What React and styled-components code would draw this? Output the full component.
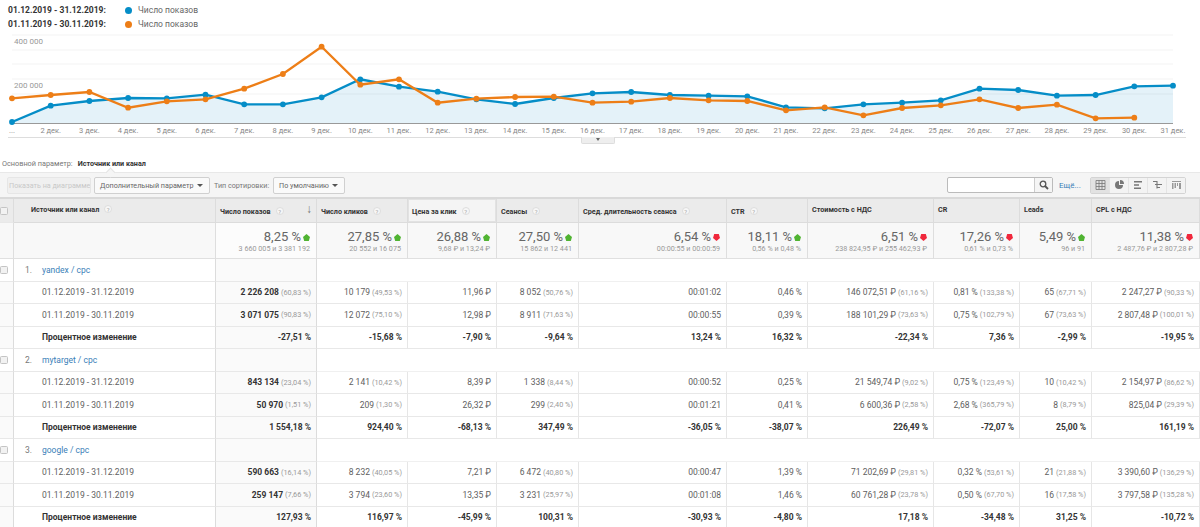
import React from 'react';
import styled, { createGlobalStyle } from 'styled-components';

const GlobalStyle = createGlobalStyle`
  html, body {
    margin: 0;
    padding: 0;
    background: #fff;
    font-family: Roboto, "Liberation Sans", sans-serif;
    overflow: hidden;
  }
`;

const COLUMNS = '14px 202px 101px 91px 89px 82px 148px 81px 126px 86px 72px 108px';
const ROW_HEIGHT = 22.5;

const Page = styled.div`
  width: 1200px;
  height: 527px;
  overflow: hidden;
`;

const Legend = styled.div`
  padding-top: 3px;
`;

const LegendRow = styled.div`
  display: flex;
  align-items: center;
  height: 14px;
  padding-left: 8px;
`;

const LegendDate = styled.span`
  width: 117px;
  font-size: 8.5px;
  font-weight: 700;
  color: #333;
`;

const LegendDot = styled.span`
  width: 7px;
  height: 7px;
  border-radius: 50%;
  margin-right: 6px;
  background: ${props => props.color};
`;

const LegendText = styled.span`
  font-size: 8.5px;
  color: #666;
`;

const ChartWrap = styled.div`
  position: relative;
  height: 114px;
`;

const ChartSvg = styled.svg`
  display: block;
`;

const AxisLabel = styled.text`
  font-size: 7.5px;
  fill: #888;
  font-family: Roboto, sans-serif;
`;

const ValueLabel = styled(AxisLabel)`
  font-size: 8px;
  fill: #999;
`;

const ChartHandle = styled.div`
  position: absolute;
  left: 581px;
  top: 106px;
  width: 32px;
  height: 6px;
  background: #eee;
  border: 1px solid #ddd;
  border-top: 0;
  border-radius: 0 0 2px 2px;
  display: flex;
  justify-content: center;

  &::after {
    content: '';
    margin-top: 1px;
    border: 2.5px solid transparent;
    border-top: 3px solid #666;
  }
`;

const ParamRow = styled.div`
  display: flex;
  gap: 5px;
  height: 27px;
  box-sizing: border-box;
  padding: 14px 0 0 2px;
  font-size: 7.3px;
  line-height: 9px;
  color: #777;
`;

const ParamValue = styled.span`
  color: #333;
  font-size: 7.2px;
  font-weight: 700;
`;

const Toolbar = styled.div`
  position: relative;
  display: flex;
  align-items: center;
  height: 25px;
  box-sizing: border-box;
  padding-left: 7px;
  background: #f5f5f5;
  border-top: 1px solid #e8e8e8;

  &::before {
    content: '';
    position: absolute;
    left: 107px;
    top: -4px;
    width: 6px;
    height: 6px;
    background: #f5f5f5;
    border-top: 1px solid #e4e4e4;
    border-left: 1px solid #e4e4e4;
    transform: rotate(45deg);
  }
`;

const ToolButton = styled.div`
  display: flex;
  align-items: center;
  justify-content: space-between;
  box-sizing: border-box;
  height: 17px;
  width: ${props => props.width}px;
  margin-right: ${props => props.gap || 0}px;
  padding: 0 6px 0 ${props => (props.disabled ? 1 : 5)}px;
  font-size: 7.2px;
  white-space: nowrap;
  overflow: hidden;
  border: 1px solid ${props => (props.disabled ? '#e6e6e6' : '#d0d0d0')};
  border-radius: 2px;
  color: ${props => (props.disabled ? '#c8c8c8' : '#666')};
  background: ${props => (props.disabled ? '#f0f0f0' : '#fafafa')};
`;

const Caret = styled.span`
  border: 3px solid transparent;
  border-top: 3.5px solid #555;
  margin-top: 3px;
`;

const ToolLabel = styled.span`
  font-size: 7.2px;
  color: #777;
  width: 59px;
`;

const SearchBox = styled.div`
  display: flex;
  margin-left: 602px;
  box-sizing: border-box;
  width: 106px;
  height: 16px;
  border: 1px solid #bbb;
  border-radius: 2px;
  background: #fff;
`;

const SearchInput = styled.div`
  flex: 1;
  border-right: 1px solid #ccc;
`;

const SearchButton = styled.div`
  width: 17px;
  background: #f5f5f5;
  display: flex;
  align-items: center;
  justify-content: center;
`;

const MoreLink = styled.span`
  margin: 0 9px 0 6px;
  width: 22px;
  font-size: 8px;
  color: #3a80b8;
`;

const ViewGroup = styled.div`
  display: flex;
  box-sizing: border-box;
  height: 17px;
  border: 1px solid #d4d4d4;
  border-radius: 2px;
`;

const ViewButton = styled.div`
  width: 18px;
  display: flex;
  align-items: center;
  justify-content: center;
  background: ${props => (props.active ? '#e2e2e2' : '#f3f3f3')};
  border-right: 1px solid #e4e4e4;
  &:last-child { border-right: 0; }
`;

const Row = styled.div`
  display: grid;
  grid-template-columns: ${COLUMNS};
  height: ${props => props.height}px;
  box-sizing: border-box;
`;

const HeadRow = styled(Row)`
  border-top: 2px solid #d9d9d9;
`;

const HeadCell = styled.div`
  display: flex;
  align-items: center;
  justify-content: space-between;
  box-sizing: border-box;
  padding: ${props => (props.raised ? '0 4px 3px 4px' : '1px 4px 0 4px')};
  background: ${props => (props.active ? '#f4f4f4' : '#ebebeb')};
  border-right: 1px solid #dcdcdc;
  border-bottom: 1px solid #dcdcdc;
  box-shadow: ${props => (props.active ? 'inset 0 0 0 1px #e2e2e2' : 'none')};
  font-size: 7.2px;
  font-weight: 700;
  color: #333;
`;

const HeadTitle = styled.span`
  display: flex;
  align-items: center;
  gap: 5px;
  white-space: nowrap;
  padding-left: ${props => props.indent || 0}px;
`;

const HelpIcon = styled.span`
  display: inline-flex;
  align-items: center;
  justify-content: center;
  box-sizing: border-box;
  width: 8px;
  height: 8px;
  border-radius: 50%;
  background: #f7f7f7;
  border: 1px solid #ddd;
  font-size: 6px;
  font-weight: 400;
  color: #aaa;
`;

const SortArrow = styled.span`
  font-size: 12px;
  font-weight: 400;
  color: #777;
  margin-top: -5px;
`;

const CheckCell = styled.div`
  display: flex;
  align-items: center;
  box-sizing: border-box;
  background: ${props => props.bg || '#fafafa'};
  border-right: 1px solid #dcdcdc;
  border-bottom: 1px solid #e8e8e8;
`;

const CheckBox = styled.span`
  display: block;
  box-sizing: border-box;
  width: 8px;
  height: 8px;
  border: 1px solid #c4c4c4;
  border-radius: 1.5px;
  background: #f2f2f2;
`;

const SummaryCell = styled.div`
  display: flex;
  flex-direction: column;
  align-items: flex-end;
  box-sizing: border-box;
  padding: 6px 6px 0 0;
  background: ${props => (props.sorted ? '#fcfcfc' : '#f8f8f8')};
  border-right: 1px solid #dedede;
  border-bottom: 1px solid #e0e0e0;
`;

const SummaryValue = styled.div`
  display: flex;
  align-items: center;
  gap: 2px;
  font-size: 13px;
  line-height: 16px;
  color: #666;
`;

const SummarySub = styled.div`
  margin-top: -1px;
  font-size: 7.2px;
  line-height: 10px;
  color: #999;
`;

const BlankCell = styled.div`
  background: #f8f8f8;
  border-right: 1px solid #dedede;
  border-bottom: 1px solid #e0e0e0;
`;

const NameCell = styled.div`
  display: flex;
  align-items: center;
  box-sizing: border-box;
  padding-left: ${props => (props.group ? 11 : 28)}px;
  background: #fff;
  border-right: 1px solid #dcdcdc;
  border-bottom: 1px solid #e8e8e8;
  font-size: 8.5px;
  font-weight: ${props => (props.bold ? 700 : 400)};
  color: ${props => (props.bold ? '#333' : '#5e5e5e')};
  white-space: nowrap;
`;

const GroupIndex = styled.span`
  width: 17px;
  color: #777;
`;

const GroupLink = styled.span`
  color: #3a80b8;
`;

const GroupRest = styled.div`
  grid-column: 4 / -1;
  background: #fff;
  border-bottom: 1px solid #f0f0f0;
`;

const ValueCell = styled.div`
  display: flex;
  align-items: center;
  justify-content: flex-end;
  gap: 2px;
  box-sizing: border-box;
  padding-right: 5px;
  background: ${props => (props.sorted ? '#fafafa' : '#fff')};
  border-right: 1px solid ${props => (props.sorted ? '#dcdcdc' : '#e6e6e6')};
  border-bottom: 1px solid #e8e8e8;
  font-size: 8.5px;
  font-weight: ${props => (props.bold ? 700 : 400)};
  color: ${props => (props.bold ? '#333' : '#5e5e5e')};
  white-space: nowrap;
`;

const LeadValue = styled.span`
  font-weight: 700;
  color: #333;
`;

const ShareText = styled.span`
  font-size: 7.3px;
  font-weight: 400;
  color: #999;
`;

const dayWidth = (1173 - 12) / 30;
const blueLine = [122, 105.7, 101, 98, 98.3, 94.7, 104.3, 104.3, 97.3, 79.3, 86.7, 91.7, 99.3, 104, 98, 93.3, 92, 95, 95.7, 96.3, 107.3, 108.3, 104.3, 102.7, 100.3, 88.7, 90, 95.7, 95, 86.3, 85.7];
const orangeLine = [98.3, 95, 92, 107.7, 101.3, 99.3, 88.7, 74, 46.7, 84.7, 79.3, 102.7, 98.7, 97, 96.7, 102.7, 101.7, 98, 100.3, 101, 110.3, 107.3, 115.3, 108, 105.3, 99.3, 108, 104.7, 118.3, 117.7];

const toPoints = line => line.map((y, i) => `${(12 + i * dayWidth).toFixed(1)},${y}`).join(' ');

function Chart() {
  return (
    <ChartWrap>
      <ChartSvg width="1200" height="114" viewBox="0 31 1200 114">
        {[35, 50, 64, 79, 94].map(y => (
          <line key={y} x1="12" x2="1173" y1={y} y2={y} stroke="#f3f3f3" />
        ))}
        <polygon points={`12,123 ${toPoints(blueLine)} 1173,123`} fill="#058dc7" fillOpacity="0.11" />
        <line x1="12" x2="1173" y1="123.5" y2="123.5" stroke="#999" />
        <line x1="8" x2="1186" y1="137.5" y2="137.5" stroke="#ddd" />
        <ValueLabel x="14" y="44">400 000</ValueLabel>
        <ValueLabel x="14" y="88">200 000</ValueLabel>
        {blueLine.map((_, i) => (
          <AxisLabel key={i} x={12 + i * dayWidth} y="133" textAnchor="middle">
            {i === 0 ? '...' : `${i + 1} дек.`}
          </AxisLabel>
        ))}
        <polyline points={toPoints(blueLine)} fill="none" stroke="#058dc7" strokeWidth="2.3" />
        {blueLine.map((y, i) => <circle key={i} cx={12 + i * dayWidth} cy={y} r="2.9" fill="#058dc7" />)}
        <polyline points={toPoints(orangeLine)} fill="none" stroke="#ed7e17" strokeWidth="2.3" />
        {orangeLine.map((y, i) => <circle key={i} cx={12 + i * dayWidth} cy={y} r="2.9" fill="#ed7e17" />)}
      </ChartSvg>
      <ChartHandle />
    </ChartWrap>
  );
}

function TrendIcon({ up }) {
  return (
    <svg width="7" height="7" viewBox="0 0 7 7">
      <polygon
        points={up ? '3.5,0 7,3 5.8,7 1.2,7 0,3' : '1.2,0 5.8,0 7,4 3.5,7 0,4'}
        fill={up ? '#50b432' : '#f0283c'}
      />
    </svg>
  );
}

function ViewIcon({ kind }) {
  const c = '#777';
  return (
    <svg width="11" height="10" viewBox="0 0 11 10">
      {kind === 'table' && (
        <path d="M1 .5h9v9H1zM1 3.5h9M1 6.5h9M4 .5v9M7 .5v9" fill="none" stroke={c} strokeWidth="0.8" />
      )}
      {kind === 'pie' && (
        <>
          <path d="M5 1a4 4 0 1 0 4 4H5z" fill={c} />
          <path d="M6 0a4 4 0 0 1 4 4H6z" fill={c} />
        </>
      )}
      {kind === 'bars' && <path d="M1 1h8v1.6H1zM1 4.2h5v1.6H1zM1 7.4h7v1.6H1z" fill={c} />}
      {kind === 'compare' && (
        <path d="M1 1.5h4v3h5M3 4.5h2v3h3M5 7.5v1" fill="none" stroke={c} strokeWidth="1.1" />
      )}
      {kind === 'pivot' && (
        <path d="M1 1h9v1H1zM1 3h1.5v6H1zM3.5 3H5v5H3.5zM6 3h1v3H6zM8 3h2v6H8z" fill="#999" />
      )}
    </svg>
  );
}

const headers = [
  { title: 'Число показов', help: true, sort: true },
  { title: 'Число кликов', help: true },
  { title: 'Цена за клик', help: true, active: true },
  { title: 'Сеансы', help: true },
  { title: 'Сред. длительность сеанса', help: true },
  { title: 'CTR', help: true },
  { title: 'Стоимость с НДС' },
  { title: 'CR' },
  { title: 'Leads' },
  { title: 'CPL с НДС' },
];

const summary = [
  ['8,25 %', true, '3 660 005 и 3 381 192'],
  ['27,85 %', true, '20 552 и 16 075'],
  ['26,88 %', true, '9,68 ₽ и 13,24 ₽'],
  ['27,50 %', true, '15 862 и 12 441'],
  ['6,54 %', false, '00:00:55 и 00:00:59'],
  ['18,11 %', true, '0,56 % и 0,48 %'],
  ['6,51 %', false, '238 824,95 ₽ и 255 462,93 ₽'],
  ['17,26 %', false, '0,61 % и 0,73 %'],
  ['5,49 %', true, '96 и 91'],
  ['11,38 %', false, '2 487,76 ₽ и 2 807,28 ₽'],
];

const groups = [
  {
    name: 'yandex / cpc',
    first: [['2 226 208', '60,83 %'], ['10 179', '49,53 %'], ['11,96 ₽'], ['8 052', '50,76 %'], ['00:01:02'], ['0,46 %'], ['146 072,51 ₽', '61,16 %'], ['0,81 %', '133,38 %'], ['65', '67,71 %'], ['2 247,27 ₽', '90,33 %']],
    second: [['3 071 075', '90,83 %'], ['12 072', '75,10 %'], ['12,98 ₽'], ['8 911', '71,63 %'], ['00:00:55'], ['0,39 %'], ['188 101,29 ₽', '73,63 %'], ['0,75 %', '102,79 %'], ['67', '73,63 %'], ['2 807,48 ₽', '100,01 %']],
    change: ['-27,51 %', '-15,68 %', '-7,90 %', '-9,64 %', '13,24 %', '16,32 %', '-22,34 %', '7,36 %', '-2,99 %', '-19,95 %'],
  },
  {
    name: 'mytarget / cpc',
    first: [['843 134', '23,04 %'], ['2 141', '10,42 %'], ['8,39 ₽'], ['1 338', '8,44 %'], ['00:00:52'], ['0,25 %'], ['21 549,74 ₽', '9,02 %'], ['0,75 %', '123,49 %'], ['10', '10,42 %'], ['2 154,97 ₽', '86,62 %']],
    second: [['50 970', '1,51 %'], ['209', '1,30 %'], ['26,32 ₽'], ['299', '2,40 %'], ['00:01:21'], ['0,41 %'], ['6 600,36 ₽', '2,58 %'], ['2,68 %', '365,79 %'], ['8', '8,79 %'], ['825,04 ₽', '29,39 %']],
    change: ['1 554,18 %', '924,40 %', '-68,13 %', '347,49 %', '-36,05 %', '-38,07 %', '226,49 %', '-72,07 %', '25,00 %', '161,19 %'],
  },
  {
    name: 'google / cpc',
    first: [['590 663', '16,14 %'], ['8 232', '40,05 %'], ['7,21 ₽'], ['6 472', '40,80 %'], ['00:00:47'], ['1,39 %'], ['71 202,69 ₽', '29,81 %'], ['0,32 %', '53,61 %'], ['21', '21,88 %'], ['3 390,60 ₽', '136,29 %']],
    second: [['259 147', '7,66 %'], ['3 794', '23,60 %'], ['13,35 ₽'], ['3 231', '25,97 %'], ['00:01:08'], ['1,46 %'], ['60 761,28 ₽', '23,78 %'], ['0,50 %', '67,70 %'], ['16', '17,58 %'], ['3 797,58 ₽', '135,28 %']],
    change: ['127,93 %', '116,97 %', '-45,99 %', '100,31 %', '-30,93 %', '-4,80 %', '17,18 %', '-34,48 %', '31,25 %', '-10,72 %'],
  },
];

function PeriodRow({ label, cells }) {
  return (
    <Row height={ROW_HEIGHT}>
      <CheckCell />
      <NameCell>{label}</NameCell>
      {cells.map(([value, share], i) => (
        <ValueCell key={i} sorted={i === 0}>
          {i === 0 ? <LeadValue>{value}</LeadValue> : value}
          {share && <ShareText>({share})</ShareText>}
        </ValueCell>
      ))}
    </Row>
  );
}

function Group({ group, index }) {
  return (
    <>
      <Row height={ROW_HEIGHT}>
        <CheckCell bg="#fff"><CheckBox /></CheckCell>
        <NameCell group>
          <GroupIndex>{index}.</GroupIndex>
          <GroupLink>{group.name}</GroupLink>
        </NameCell>
        <ValueCell sorted />
        <GroupRest />
      </Row>
      <PeriodRow label="01.12.2019 - 31.12.2019" cells={group.first} />
      <PeriodRow label="01.11.2019 - 30.11.2019" cells={group.second} />
      <Row height={ROW_HEIGHT}>
        <CheckCell />
        <NameCell bold>Процентное изменение</NameCell>
        {group.change.map((value, i) => (
          <ValueCell key={i} sorted={i === 0} bold>{value}</ValueCell>
        ))}
      </Row>
    </>
  );
}

export default function App() {
  return (
    <Page>
      <GlobalStyle />
      <Legend>
        <LegendRow>
          <LegendDate>01.12.2019 - 31.12.2019:</LegendDate>
          <LegendDot color="#058dc7" />
          <LegendText>Число показов</LegendText>
        </LegendRow>
        <LegendRow>
          <LegendDate>01.11.2019 - 30.11.2019:</LegendDate>
          <LegendDot color="#ed7e17" />
          <LegendText>Число показов</LegendText>
        </LegendRow>
      </Legend>
      <Chart />
      <ParamRow>
        Основной параметр:
        <ParamValue>Источник или канал</ParamValue>
      </ParamRow>
      <Toolbar>
        <ToolButton width={84} gap={3} disabled>Показать на диаграмме</ToolButton>
        <ToolButton width={116} gap={4}>Дополнительный параметр<Caret /></ToolButton>
        <ToolLabel>Тип сортировки:</ToolLabel>
        <ToolButton width={72}>По умолчанию<Caret /></ToolButton>
        <SearchBox>
          <SearchInput />
          <SearchButton>
            <svg width="10" height="10" viewBox="0 0 10 10">
              <circle cx="4" cy="4" r="2.8" fill="none" stroke="#555" strokeWidth="1.3" />
              <path d="M6 6l3 3" stroke="#555" strokeWidth="1.8" />
            </svg>
          </SearchButton>
        </SearchBox>
        <MoreLink>Ещё...</MoreLink>
        <ViewGroup>
          <ViewButton active><ViewIcon kind="table" /></ViewButton>
          <ViewButton><ViewIcon kind="pie" /></ViewButton>
          <ViewButton><ViewIcon kind="bars" /></ViewButton>
          <ViewButton><ViewIcon kind="compare" /></ViewButton>
          <ViewButton><ViewIcon kind="pivot" /></ViewButton>
        </ViewGroup>
      </Toolbar>
      <HeadRow height={26}>
        <CheckCell bg="#ebebeb"><CheckBox /></CheckCell>
        <HeadCell raised>
          <HeadTitle indent={13}>Источник или канал<HelpIcon>?</HelpIcon></HeadTitle>
        </HeadCell>
        {headers.map(h => (
          <HeadCell key={h.title} active={h.active} raised={!h.help}>
            <HeadTitle>{h.title}{h.help && <HelpIcon>?</HelpIcon>}</HeadTitle>
            {h.sort && <SortArrow>↓</SortArrow>}
          </HeadCell>
        ))}
      </HeadRow>
      <Row height={36}>
        <BlankCell />
        <BlankCell />
        {summary.map(([value, up, sub], i) => (
          <SummaryCell key={i} sorted={i === 0}>
            <SummaryValue>{value}<TrendIcon up={up} /></SummaryValue>
            <SummarySub>{sub}</SummarySub>
          </SummaryCell>
        ))}
      </Row>
      {groups.map((group, i) => <Group key={group.name} group={group} index={i + 1} />)}
    </Page>
  );
}
